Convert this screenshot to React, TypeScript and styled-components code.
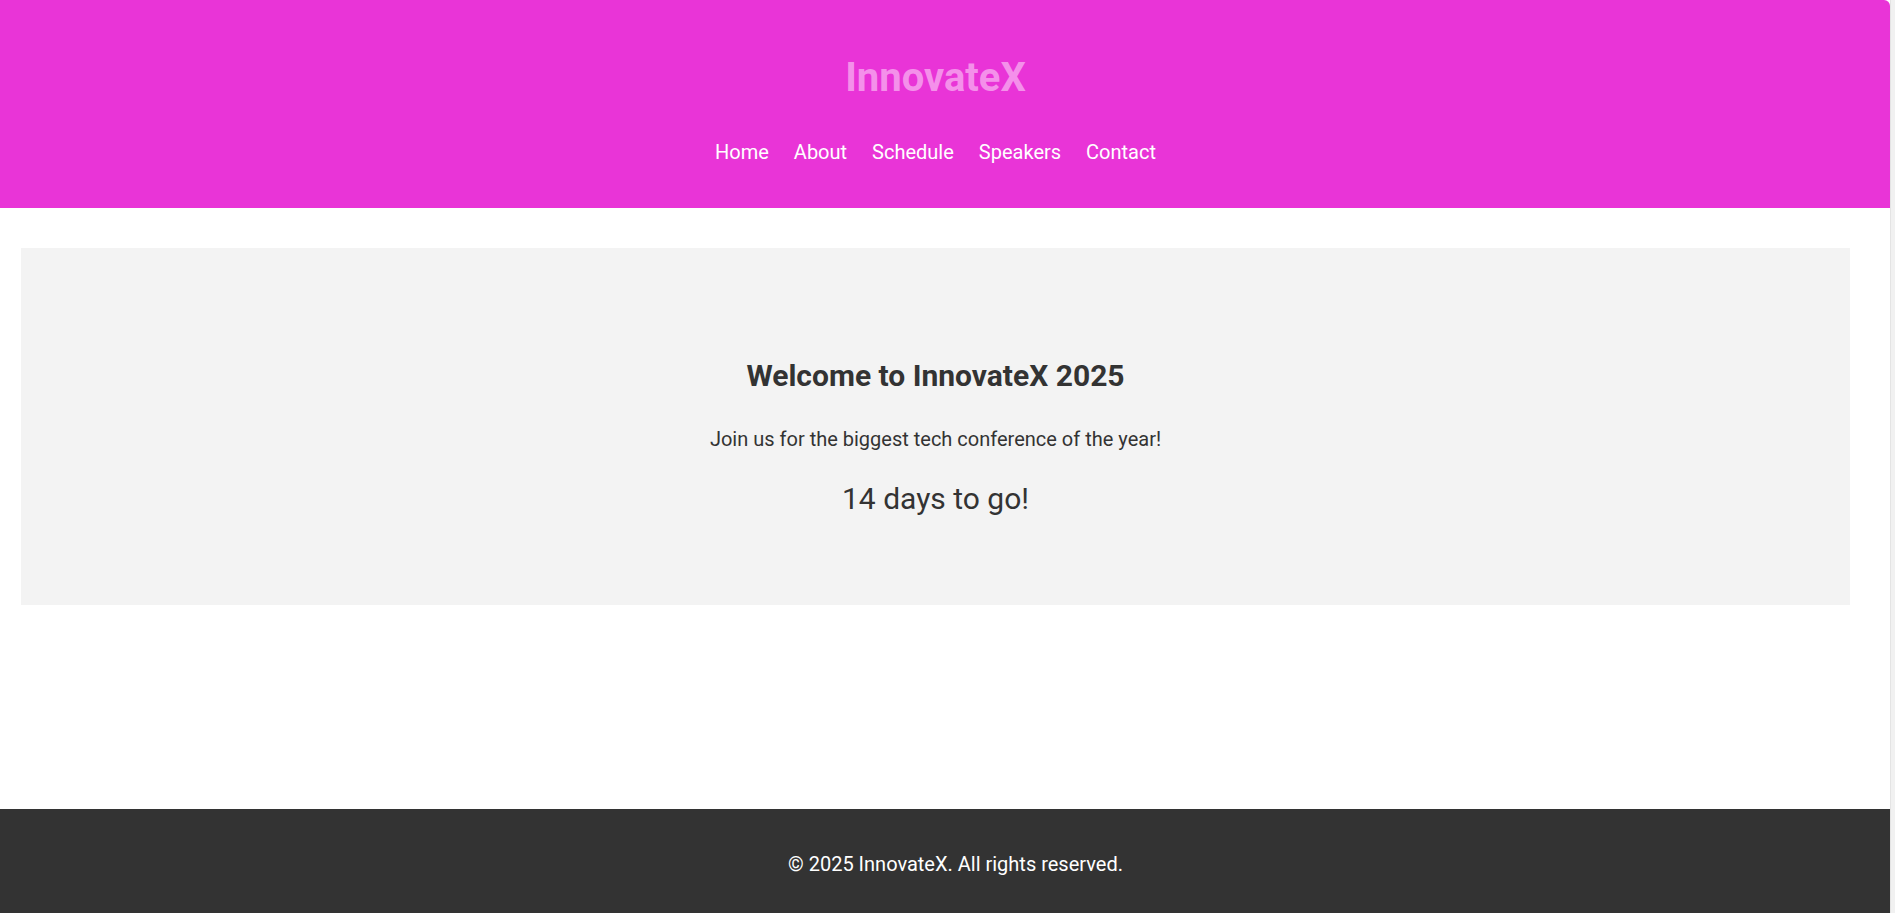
import React from "react";
import styled, { createGlobalStyle } from "styled-components";

const GlobalStyle = createGlobalStyle`
  html, body {
    margin: 0;
    padding: 0;
    height: 100%;
    background: #f1f1f1;
  }
  body {
    font-family: Roboto, "Liberation Sans", Arial, sans-serif;
    color: #333333;
  }
  #root {
    min-height: 100%;
  }
`;

const Page = styled.div`
  display: flex;
  flex-direction: column;
  min-height: 913px;
  margin-right: 4px;
  background: #ffffff;
  border-right: 1px solid #e4e4e4;
`;

const Header = styled.header`
  background: #e934d7;
  border-top-right-radius: 6px;
  display: flex;
  flex-direction: column;
  align-items: center;
  padding: 54px 19px 44px 0;
`;

const Logo = styled.h1`
  margin: 0 0 39px;
  font-size: 40px;
  font-weight: 700;
  line-height: 47px;
  color: #f490ea;
`;

const Nav = styled.nav`
  display: flex;
  gap: 25px;
`;

const NavLink = styled.a`
  color: #ffffff;
  text-decoration: none;
  font-size: 20px;
  line-height: 24px;
`;

const Main = styled.main`
  flex: 1;
  padding: 40px 40px 0 21px;
`;

const Hero = styled.section`
  background: #f3f3f3;
  padding: 110px 20px 89px;
  text-align: center;
  display: flex;
  flex-direction: column;
  align-items: center;
`;

const Title = styled.h2`
  margin: 0;
  font-size: 30px;
  font-weight: 700;
  line-height: 35px;
  color: #333333;
`;

const Lead = styled.p`
  margin: 34px 0 0;
  font-size: 20px;
  line-height: 24px;
  color: #333333;
`;

const Countdown = styled.div`
  margin-top: 30px;
  font-size: 30px;
  line-height: 35px;
  color: #333333;
`;

const Footer = styled.footer`
  background: #333333;
  color: #ffffff;
  text-align: center;
  height: 104px;
  box-sizing: border-box;
  padding: 43px 0 0 21px;
  font-size: 20px;
  line-height: 24px;
`;

const links = ["Home", "About", "Schedule", "Speakers", "Contact"];

export default function App() {
  return (
    <>
      <GlobalStyle />
      <Page>
        <Header>
          <Logo>InnovateX</Logo>
          <Nav>
            {links.map((l) => (
              <NavLink key={l} href="#">
                {l}
              </NavLink>
            ))}
          </Nav>
        </Header>
        <Main>
          <Hero>
            <Title>Welcome to InnovateX 2025</Title>
            <Lead>Join us for the biggest tech conference of the year!</Lead>
            <Countdown>14 days to go!</Countdown>
          </Hero>
        </Main>
        <Footer>© 2025 InnovateX. All rights reserved.</Footer>
      </Page>
    </>
  );
}
